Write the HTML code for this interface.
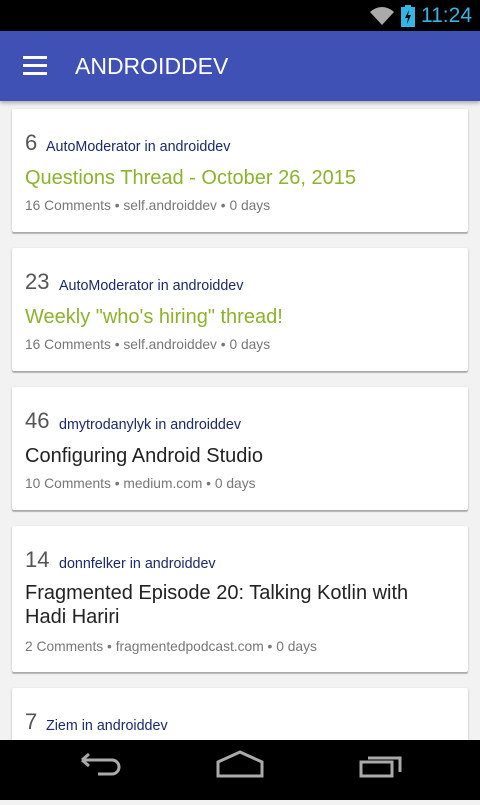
<!DOCTYPE html>
<html><head><style>
*{margin:0;padding:0;box-sizing:border-box}
body{width:480px;height:800px;overflow:hidden;background:#f2f2f2;font-family:"Liberation Sans",sans-serif;position:relative}
.sb{position:absolute;top:0;left:0;width:480px;height:31px;background:#000}
.sb .t{position:absolute;right:8px;top:4px;color:#33b5e5;font-size:21px}
.tb{position:absolute;top:31px;left:0;width:480px;height:70px;background:#3f51b5;box-shadow:0 2px 4px rgba(0,0,0,.3);z-index:2}
.tb .h{position:absolute;left:23px;width:24px;height:3px;background:#fff}
.tb .ti{position:absolute;left:75px;top:22px;color:#fff;font-size:23px}
.card{position:absolute;left:12px;width:456px;background:#fff;border-radius:2px;box-shadow:0 1px 2px rgba(0,0,0,.25),0 2px 0 #ccc}
.sc{position:absolute;left:13px;font-size:22px;color:#555}
.au{position:absolute;font-size:14.3px;color:#1a2a6c}
.tt{position:absolute;left:13px;font-size:20px;line-height:24px;color:#222;width:400px}
.g{color:#8ab42a}
.me{position:absolute;left:13px;font-size:13.8px;color:#777}
.nav{position:absolute;top:740px;left:0;width:480px;height:60px;background:#000;z-index:3}
</style></head><body>
<div class="sb">
<svg style="position:absolute;left:370px;top:6px" width="24" height="20" viewBox="0 0 24 20"><path d="M12 19 L0 6 A17 17 0 0 1 24 6 Z" fill="#aaa"/></svg>
<svg style="position:absolute;left:401px;top:5px" width="14" height="22"><rect x="4" y="0" width="6" height="3" fill="#33b5e5"/><rect x="0" y="2" width="14" height="20" fill="#33b5e5"/><path d="M8 5 L4 13 H7 L6 19 L10 10 H7 Z" fill="#000"/></svg>
<div class="t">11:24</div></div>
<div class="tb"><div class="h" style="top:25px"></div><div class="h" style="top:33px"></div><div class="h" style="top:41px"></div><div class="ti">ANDROIDDEV</div></div>

<div class="card" style="top:109px;height:123px"><div class="sc" style="top:21px">6</div><div class="au" style="left:34px;top:30px">AutoModerator in androiddev</div><div class="tt g" style="top:57px">Questions Thread - October 26, 2015</div><div class="me" style="top:89px">16 Comments • self.androiddev • 0 days</div></div>
<div class="card" style="top:248px;height:123px"><div class="sc" style="top:21px">23</div><div class="au" style="left:47px;top:30px">AutoModerator in androiddev</div><div class="tt g" style="top:57px">Weekly "who's hiring" thread!</div><div class="me" style="top:89px">16 Comments • self.androiddev • 0 days</div></div>
<div class="card" style="top:387px;height:123px"><div class="sc" style="top:21px">46</div><div class="au" style="left:47px;top:30px">dmytrodanylyk in androiddev</div><div class="tt" style="top:57px">Configuring Android Studio</div><div class="me" style="top:89px">10 Comments • medium.com • 0 days</div></div>
<div class="card" style="top:526px;height:146px"><div class="sc" style="top:21px">14</div><div class="au" style="left:47px;top:30px">donnfelker in androiddev</div><div class="tt" style="top:55px">Fragmented Episode 20: Talking Kotlin with<br>Hadi Hariri</div><div class="me" style="top:113px">2 Comments • fragmentedpodcast.com • 0 days</div></div>
<div class="card" style="top:688px;height:100px"><div class="sc" style="top:21px">7</div><div class="au" style="left:34px;top:30px">Ziem in androiddev</div></div>

<div class="nav"><svg width="480" height="60">
<g fill="none" stroke="#aaa" stroke-width="3">
<path d="M82 20 L89 14 M82 20 L89 26 M82 20 H112 A6 6 0 0 1 112 34 H98"/>
<path d="M218 22 L240 12 L262 22 V36 H218 Z"/>
<path d="M361 22 H392 V36 H361 Z M368 18 H400 V32"/>
</g></svg></div>
</body></html>
